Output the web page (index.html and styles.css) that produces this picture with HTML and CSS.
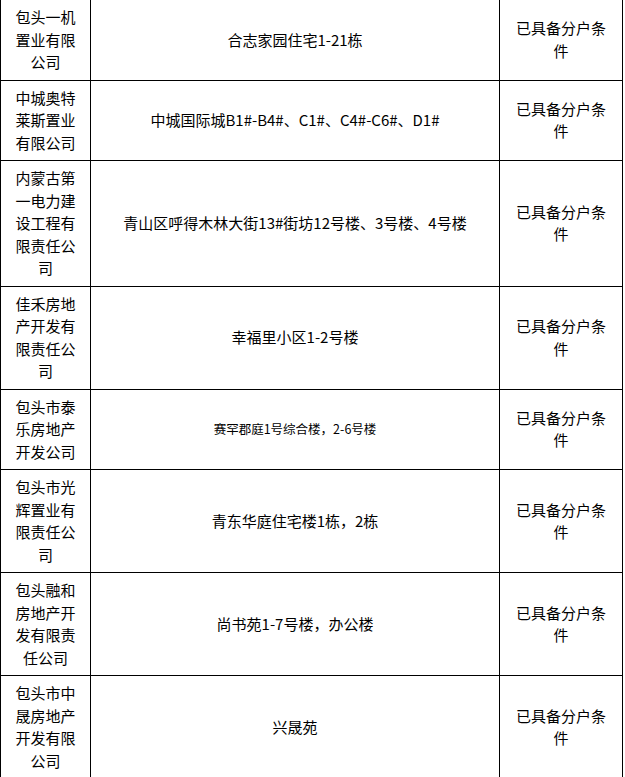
FILE: index.html
```html
<!DOCTYPE html>
<html lang="zh">
<head>
<meta charset="utf-8">
<title>备案</title>
<link rel="stylesheet" href="styles.css">
</head>
<body>
<table class="grid">
  <colgroup>
    <col class="c1">
    <col class="c2">
    <col class="c3">
  </colgroup>
  <tbody>
    <tr>
      <td>包头一机置业有限公司</td>
      <td>合志家园住宅1-21栋</td>
      <td>已具备分户条件</td>
    </tr>
    <tr>
      <td>中城奥特莱斯置业有限公司</td>
      <td>中城国际城B1#-B4#、C1#、C4#-C6#、D1#</td>
      <td>已具备分户条件</td>
    </tr>
    <tr>
      <td>内蒙古第一电力建设工程有限责任公司</td>
      <td>青山区呼得木林大街13#街坊12号楼、3号楼、4号楼</td>
      <td>已具备分户条件</td>
    </tr>
    <tr>
      <td>佳禾房地产开发有限责任公司</td>
      <td>幸福里小区1-2号楼</td>
      <td>已具备分户条件</td>
    </tr>
    <tr>
      <td>包头市泰乐房地产开发公司</td>
      <td class="small">赛罕郡庭1号综合楼，2-6号楼</td>
      <td>已具备分户条件</td>
    </tr>
    <tr>
      <td>包头市光辉置业有限责任公司</td>
      <td>青东华庭住宅楼1栋，2栋</td>
      <td>已具备分户条件</td>
    </tr>
    <tr>
      <td>包头融和房地产开发有限责任公司</td>
      <td>尚书苑1-7号楼，办公楼</td>
      <td>已具备分户条件</td>
    </tr>
    <tr>
      <td>包头市中晟房地产开发有限公司</td>
      <td>兴晟苑</td>
      <td>已具备分户条件</td>
    </tr>
  </tbody>
</table>
</body>
</html>
```
FILE: styles.css
```css
html, body {
  margin: 0;
  padding: 0;
  background: #fff;
}

.grid {
  border-collapse: collapse;
  table-layout: fixed;
  width: 623px;
  margin-top: -1px;
  font-family: "Noto Sans CJK SC", "Noto Sans", sans-serif;
  font-size: 15px;
  line-height: 22.5px;
  color: #000;
}

.c1 { width: 90px; }
.c2 { width: 409px; }
.c3 { width: 123px; }

.grid td {
  border: 1px solid #000;
  padding: 6px 10px;
  text-align: center;
  vertical-align: middle;
  word-break: break-all;
}

.grid td.small {
  font-size: 12.5px;
}
```
